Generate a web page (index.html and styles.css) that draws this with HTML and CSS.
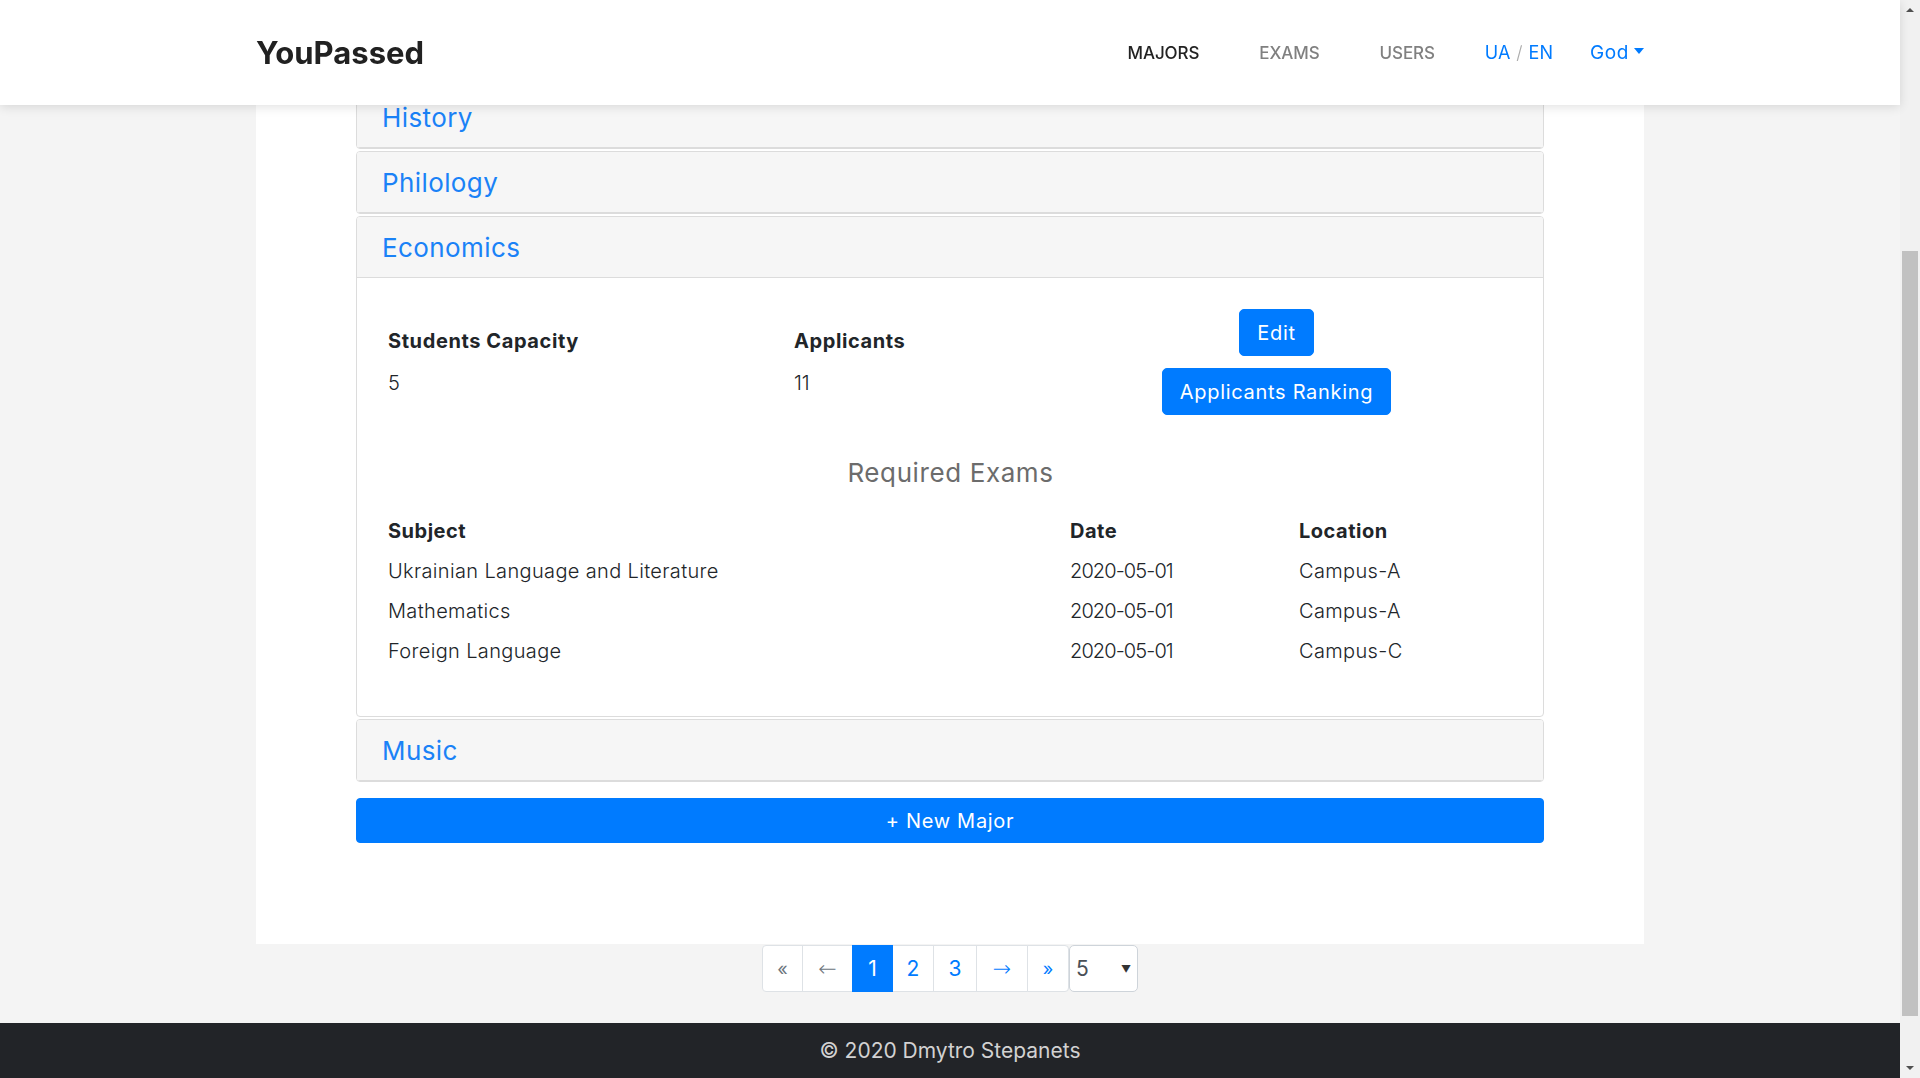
FILE: index.html
```html
<!DOCTYPE html>
<html lang="en">
<head>
<meta charset="utf-8">
<title>YouPassed</title>
<link rel="stylesheet" href="styles.css">
</head>
<body>
<div class="viewport">
  <div class="page">
    <nav class="navbar">
      <div class="nav-inner">
        <a class="brand" href="#">YouPassed</a>
        <div class="nav-right">
          <a class="nav-link active" href="#">MAJORS</a>
          <a class="nav-link" href="#">EXAMS</a>
          <a class="nav-link" href="#">USERS</a>
          <div class="lang"><a href="#">UA</a><span class="slash">/</span><a href="#">EN</a></div>
          <a class="user" href="#">God<span class="caret"></span></a>
        </div>
      </div>
    </nav>

    <main class="main">
      <section class="panel">
        <div class="accordion">
          <div class="card">
            <div class="card-header"><a href="#">History</a></div>
          </div>
          <div class="card">
            <div class="card-header"><a href="#">Philology</a></div>
          </div>
          <div class="card">
            <div class="card-header"><a href="#">Economics</a></div>
            <div class="card-body">
              <div class="info-row">
                <div class="info">
                  <div class="info-label">Students Capacity</div>
                  <div class="info-value">5</div>
                </div>
                <div class="info">
                  <div class="info-label">Applicants</div>
                  <div class="info-value">11</div>
                </div>
                <div class="actions">
                  <button class="btn">Edit</button>
                  <button class="btn">Applicants Ranking</button>
                </div>
              </div>
              <h3 class="exams-title">Required Exams</h3>
              <div class="exams">
                <div class="th">Subject</div><div class="th">Date</div><div class="th">Location</div>
                <div class="td">Ukrainian Language and Literature</div><div class="td date">2020-05-01</div><div class="td">Campus-A</div>
                <div class="td">Mathematics</div><div class="td date">2020-05-01</div><div class="td">Campus-A</div>
                <div class="td">Foreign Language</div><div class="td date">2020-05-01</div><div class="td">Campus-C</div>
              </div>
            </div>
          </div>
          <div class="card">
            <div class="card-header"><a href="#">Music</a></div>
          </div>
        </div>
        <button class="btn btn-block">+ New Major</button>
      </section>

      <div class="pager">
        <span class="pg pg-first disabled">&laquo;</span>
        <span class="pg pg-arrow w50 disabled">&larr;</span>
        <span class="pg w40 active">1</span>
        <a class="pg w41" href="#">2</a>
        <a class="pg w43" href="#">3</a>
        <a class="pg pg-arrow w51" href="#">&rarr;</a>
        <a class="pg pg-last" href="#">&raquo;</a>
        <div class="page-size"><span>5</span><span class="tri">&#9660;</span></div>
      </div>
    </main>

    <footer class="footer">&copy; 2020 Dmytro Stepanets</footer>
  </div>

  <div class="scrollbar">
    <div class="sb-btn"><span class="sb-up"></span></div>
    <div class="sb-track"><div class="sb-thumb"></div></div>
    <div class="sb-btn"><span class="sb-down"></span></div>
  </div>
</div>
</body>
</html>
```

FILE: styles.css
```css
* { box-sizing: border-box; }

html, body {
  margin: 0;
  padding: 0;
  height: 1078px;
  overflow: hidden;
}

body {
  font-family: Inter, "Open Sans", "DejaVu Sans", sans-serif;
  color: #212529;
  background: #f4f4f4;
}

a { text-decoration: none; }

.viewport {
  display: flex;
  height: 1078px;
}

.page {
  width: 1900px;
  height: 1078px;
  display: flex;
  flex-direction: column;
  overflow: hidden;
}

/* ---------- navbar ---------- */
.navbar {
  position: fixed;
  top: 0;
  left: 0;
  width: 1900px;
  height: 105px;
  background: #fff;
  box-shadow: 0 2px 10px rgba(0,0,0,0.12);
  z-index: 10;
}

.nav-inner {
  width: 1388px;
  height: 100%;
  margin: 0 auto;
  display: flex;
  align-items: center;
  justify-content: space-between;
}

.brand {
  font-size: 31px;
  font-weight: 700;
  color: #212121;
  letter-spacing: 0;
}

.nav-right {
  display: flex;
  align-items: center;
  font-size: 17px;
}

.nav-link {
  color: #808080;
  font-weight: 500;
  margin-left: 60px;
  letter-spacing: -0.1px;
}
.nav-link.active { color: #222; margin-left: 0; }

.lang {
  margin-left: 50px;
  color: #007bff;
  font-weight: 400;
  font-size: 18px;
}
.lang a { color: #007bff; }
.slash { color: #aaa; margin: 0 6px; font-weight: 300; }

.user {
  margin-left: 37px;
  color: #007bff;
  font-size: 19px;
  display: flex;
  align-items: center;
  letter-spacing: 0.6px;
}
.caret {
  display: inline-block;
  margin-left: 5px;
  margin-top: -4px;
  border-left: 5px solid transparent;
  border-right: 5px solid transparent;
  border-top: 6px solid #007bff;
}

/* ---------- main ---------- */
.main {
  flex: 1;
  display: flex;
  flex-direction: column;
  align-items: center;
  background: #f4f4f4;
}

.panel {
  width: 1388px;
  background: #fff;
  padding: 86px 100px 101px 100px;
}

.accordion { display: flex; flex-direction: column; gap: 2px; }

.card {
  border: 1px solid #dcdcdc;
  border-radius: 4px;
  background: #fff;
  overflow: hidden;
}

.card-header {
  height: 61px;
  background: #f6f6f6;
  border-bottom: 1px solid #dcdcdc;
  display: flex;
  align-items: center;
  padding-left: 25px;
}
.card-header a {
  color: #1a82f7;
  font-size: 26px;
  font-weight: 400;
  letter-spacing: 0.4px;
}

.card-body {
  padding: 31px 30px 45px 31px;
}

.info-row {
  display: grid;
  grid-template-columns: 406px 356px 253px;
  align-items: center;
}

.info-label {
  font-size: 20px;
  font-weight: 700;
  line-height: 30px;
  margin-bottom: 12px;
  letter-spacing: 0.6px;
}
.info-value {
  font-size: 20px;
  font-weight: 300;
  line-height: 30px;
}

.actions {
  display: flex;
  flex-direction: column;
  align-items: center;
  gap: 12px;
}

.btn {
  font-family: inherit;
  font-size: 20px;
  font-weight: 400;
  letter-spacing: 0.7px;
  white-space: nowrap;
  color: #fff;
  background: #007bff;
  border: 1px solid #007bff;
  border-radius: 5px;
  height: 47px;
  padding: 0 17px;
  cursor: pointer;
}

.exams-title {
  margin: 43px 0 23px;
  text-align: center;
  font-size: 26px;
  font-weight: 400;
  color: #6c6c6c;
  line-height: 30px;
  letter-spacing: 0.6px;
}

.exams {
  display: grid;
  grid-template-columns: 682px 229px 1fr;
  grid-auto-rows: 40px;
  align-items: center;
  font-size: 20px;
  letter-spacing: 0.35px;
}
.th { font-weight: 700; letter-spacing: 0.5px; }
.td { font-weight: 300; }
.td.date { letter-spacing: -0.9px; }

.btn-block {
  display: block;
  width: 100%;
  height: 45px;
  margin-top: 16px;
  border-radius: 4px;
}

/* ---------- pager ---------- */
.pager {
  display: flex;
  margin-top: 1px;
  height: 47px;
}

.pg {
  display: flex;
  align-items: center;
  justify-content: center;
  height: 47px;
  padding: 0;
  border: 1px solid #dee2e6;
  margin-left: -1px;
  background: #fff;
  color: #007bff;
  font-size: 21px;
  font-weight: 400;
}
.pg-arrow {
  font-family: "DejaVu Sans", sans-serif;
  font-weight: 300;
  font-size: 22px;
}
.pg.disabled { color: #6c757d; }
.pg.active { background: #007bff; border-color: #007bff; color: #fff; z-index: 1; }
.pg-first { border-radius: 4px 0 0 4px; margin-left: 0; width: 41px; font-size: 18px; }
.pg-last { border-radius: 0 4px 4px 0; width: 42px; font-size: 18px; }
.w40 { width: 41px; }
.w41 { width: 42px; }
.w43 { width: 44px; }
.w50 { width: 51px; }
.w51 { width: 52px; }

.page-size {
  width: 69px;
  height: 47px;
  border: 1px solid #ced4da;
  border-radius: 5px;
  background: #fff;
  display: flex;
  align-items: center;
  justify-content: space-between;
  padding: 0 6px 0 6px;
  font-size: 21px;
  font-weight: 400;
  color: #495057;
}
.page-size .tri { font-size: 10px; color: #333; }

/* ---------- footer ---------- */
.footer {
  height: 55px;
  background: #222428;
  color: #d2d2d2;
  font-size: 21px;
  display: flex;
  align-items: center;
  justify-content: center;
}

/* ---------- fake scrollbar ---------- */
.scrollbar {
  width: 20px;
  height: 1078px;
  background: #f1f1f1;
  display: flex;
  flex-direction: column;
}
.sb-btn {
  height: 20px;
  display: flex;
  align-items: center;
  justify-content: center;
}
.sb-up {
  border-left: 4px solid transparent;
  border-right: 4px solid transparent;
  border-bottom: 4px solid #505050;
}
.sb-down {
  border-left: 4px solid transparent;
  border-right: 4px solid transparent;
  border-top: 4px solid #505050;
}
.sb-track { flex: 1; padding: 0 2px; }
.sb-thumb {
  margin-top: 231px;
  height: 765px;
  background: #c1c1c1;
}
```
